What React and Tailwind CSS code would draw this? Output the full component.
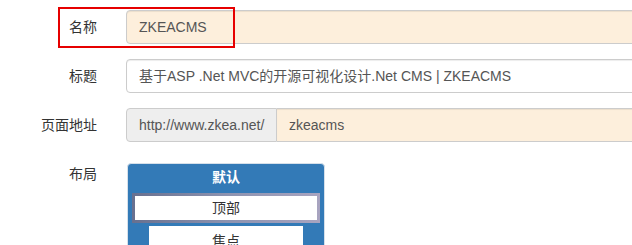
const font = { fontFamily: '"Liberation Sans", "Noto Sans CJK SC", sans-serif' };

const Label = ({ children, className = "" }) => (
  <label className={`w-[97px] shrink-0 text-right text-sm text-[#333] ${className}`}>{children}</label>
);

export default function App() {
  return (
    <div className="relative w-[632px] h-[245px] overflow-hidden bg-white" style={font}>
      <div className="w-[760px] pt-[10px]">
        {/* 名称 */}
        <div className="flex items-center">
          <Label>名称</Label>
          <div className="ml-[29px] flex-1 h-[34px] flex items-center px-[12px] bg-[#fdefdc] border border-[#ccc] rounded-[4px] text-sm text-[#555] shadow-[inset_0_1px_1px_rgba(0,0,0,0.075)]">
            ZKEACMS
          </div>
        </div>

        {/* 标题 */}
        <div className="flex items-center mt-[15px]">
          <Label>标题</Label>
          <div className="ml-[29px] flex-1 h-[34px] flex items-center px-[12px] bg-white border border-[#ccc] rounded-[4px] text-sm text-[#555] shadow-[inset_0_1px_1px_rgba(0,0,0,0.075)]">
            基于ASP .Net MVC的开源可视化设计.Net CMS | ZKEACMS
          </div>
        </div>

        {/* 页面地址 */}
        <div className="flex items-center mt-[15px]">
          <Label>页面地址</Label>
          <div className="ml-[29px] flex-1 h-[34px] flex">
            <div className="w-[151px] flex items-center px-[12px] bg-[#eee] border border-[#ccc] rounded-l-[4px] text-sm text-[#555]">
              http://www.zkea.net/
            </div>
            <div className="flex-1 flex items-center px-[12px] bg-[#fdefdc] border border-l-0 border-[#ccc] rounded-r-[4px] text-sm text-[#555] shadow-[inset_0_1px_1px_rgba(0,0,0,0.075)]">
              zkeacms
            </div>
          </div>
        </div>

        {/* 布局 */}
        <div className="flex items-start mt-[21px]">
          <Label className="pt-[1px]">布局</Label>
          <div className="ml-[30px] w-[198px] h-[120px] bg-[#337ab7] border border-[#d6e0ea] rounded-[4px] flex flex-col items-center">
            <div className="h-[29px] pb-[4px] flex items-center justify-center text-sm font-bold text-white">默认</div>
            <div className="w-[188px] h-[30px] p-[3px] bg-gradient-to-r from-[#68708f] via-[#8d93b0] to-[#a8a4c0]">
              <div className="h-full bg-white flex items-center justify-center text-sm text-[#333]">顶部</div>
            </div>
            <div className="mt-[3px] w-[154px] h-[30px] bg-white flex items-center justify-center text-sm text-[#333]">焦点</div>
          </div>
        </div>
      </div>

      {/* annotation */}
      <div className="absolute left-[58px] top-[7px] w-[177px] h-[41px] border-2 border-[#e60000]" />
    </div>
  );
}
